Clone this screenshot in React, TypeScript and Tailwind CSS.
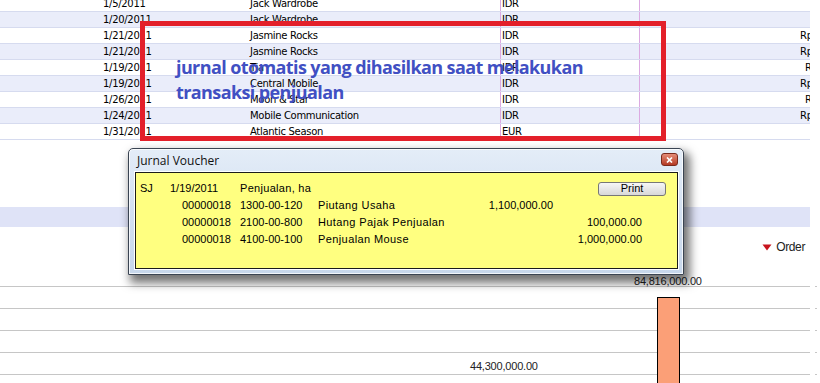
import React from "react";

type Row = {
  date: string;
  name: string;
  cur: string;
  amount?: string;
  shift?: boolean;
};

const rows: Row[] = [
  { date: "1/5/2011", name: "Jack Wardrobe", cur: "IDR" },
  { date: "1/20/2011", name: "Jack Wardrobe", cur: "IDR" },
  { date: "1/21/2011", name: "Jasmine Rocks", cur: "IDR", amount: "Rp 12,500,000.00" },
  { date: "1/21/2011", name: "Jasmine Rocks", cur: "IDR", amount: "Rp 9,800,000.00" },
  { date: "1/19/2011", name: "Tia", cur: "IDR", amount: "Rp 1,100,000.00", shift: true },
  { date: "1/19/2011", name: "Central Mobile", cur: "IDR", amount: "Rp 22,000,000.00" },
  { date: "1/26/2011", name: "Moon & Star", cur: "IDR", amount: "Rp 3,400,000.00", shift: true },
  { date: "1/24/2011", name: "Mobile Communication", cur: "IDR", amount: "Rp 15,600,000.00" },
  { date: "1/31/2011", name: "Atlantic Season", cur: "EUR" },
];

const lines = [
  { no: "00000018", acc: "1300-00-120", name: "Piutang Usaha", debit: "1,100,000.00", credit: "" },
  { no: "00000018", acc: "2100-00-800", name: "Hutang Pajak Penjualan", debit: "", credit: "100,000.00" },
  { no: "00000018", acc: "4100-00-100", name: "Penjualan Mouse", debit: "", credit: "1,000,000.00" },
];

const TableRow = ({ row, odd }: { row: Row; odd: boolean }) => (
  <div
    className={`flex h-4 items-center border-b border-[#d6dbef] text-black ${
      odd ? "bg-[#eaedfa]" : "bg-white"
    }`}
  >
    <div className="w-[103px] shrink-0"></div>
    <div className="w-[147px] shrink-0">{row.date}</div>
    <div className="w-[250px] shrink-0">{row.name}</div>
    <div className="h-full w-[139px] shrink-0 border-l border-[#dcaae2] pl-px flex items-center">
      {row.cur}
    </div>
    <div className="h-full w-[161px] shrink-0 border-l border-[#dcaae2]"></div>
    <div className="w-[10px] shrink-0 overflow-hidden whitespace-nowrap">
      {row.amount && <span className={row.shift ? "pl-[5px]" : ""}>{row.amount}</span>}
    </div>
  </div>
);

const Dialog = () => (
  <div className="absolute left-[128px] top-[148px] flex h-[127px] w-[556px] flex-col rounded-t-[5px] border border-[#3a4452] bg-gradient-to-b from-[#e4edf8] via-[#d3e0f1] to-[#c7d7eb] shadow-[4px_6px_10px_2px_rgba(0,0,0,0.55),inset_0_0_0_1px_rgba(255,255,255,0.75)]">
    <div className="flex h-[23px] shrink-0 items-start justify-between pl-2 pr-[5px]">
      <span className="mt-[4px] font-['Open_Sans'] text-[12px] leading-[15px] text-[#111]">
        Jurnal Voucher
      </span>
      <div className="mt-[4px] flex h-[13px] w-[17px] items-center justify-center rounded-[3px] border border-[#7a2a1e] bg-gradient-to-b from-[#e48c78] to-[#b43823]">
        <svg width="7" height="6" viewBox="0 0 7 6">
          <path d="M1 0.5 L6 5.5 M6 0.5 L1 5.5" stroke="white" strokeWidth="1.7" />
        </svg>
      </div>
    </div>
    <div className="mb-[5px] ml-[6px] mr-[5px] h-[97px] border border-[#1c1c1c] bg-[#ffff80] pt-[7px] font-['Liberation_Sans'] text-[11px] text-black shadow-[0_0_0_1px_#ffffff]">
      <div className="flex h-[17px] items-center pl-[4px]">
        <div className="w-[30px] shrink-0">SJ</div>
        <div className="w-[70px] shrink-0">1/19/2011</div>
        <div className="flex-1 tracking-[0.3px]">Penjualan, ha</div>
        <button className="mr-[11px] flex h-[14px] w-[68px] items-center justify-center rounded-[3px] border border-[#777] bg-gradient-to-b from-[#f6f6f6] to-[#d8d8d8] text-[11px] leading-none text-black">
          Print
        </button>
      </div>
      {lines.map((l) => (
        <div key={l.acc} className="flex h-[17px] items-center pl-[46px]">
          <div className="w-[58px] shrink-0">{l.no}</div>
          <div className="w-[78px] shrink-0">{l.acc}</div>
          <div className="w-[145px] shrink-0 tracking-[0.4px]">{l.name}</div>
          <div className="w-[90px] shrink-0 text-right">{l.debit}</div>
          <div className="w-[89px] shrink-0 text-right">{l.credit}</div>
        </div>
      ))}
    </div>
  </div>
);

export default function App() {
  return (
    <div className="relative h-[383px] w-[820px] overflow-hidden bg-white">
      <div className="-mt-[4px] w-[810px] font-['DejaVu_Sans'] text-[10px] leading-none tracking-[-0.3px]">
        {rows.map((r, i) => (
          <TableRow key={i} row={r} odd={i % 2 === 1} />
        ))}
      </div>

      <div className="mt-[67px] h-[20px] w-[810px] bg-[#dfe3f7]"></div>

      <div className="mt-[12px] flex h-[16px] items-center justify-end pr-[15px] font-['Liberation_Sans'] text-[12px] tracking-[-0.4px] text-[#222]">
        <svg width="10" height="7" viewBox="0 0 10 7" className="mr-[4px]">
          <path d="M0.5 0.5 L9.5 0.5 L5 6.5 Z" fill="#c8141e" />
        </svg>
        Order
      </div>

      <div className="relative mt-[20px] h-[200px]">
        <div className="flex flex-col pt-[11px]">
          {[0, 1, 2, 3, 4].map((n) => (
            <div key={n} className="mb-[21px] flex h-px items-center">
              <div className="h-px w-[810px] bg-[#c6c6c6]"></div>
              <div className="ml-[5px] h-px w-[2px] bg-[#c6c6c6]"></div>
            </div>
          ))}
        </div>
        <span className="absolute left-[634px] top-[0px] font-['Liberation_Sans'] text-[11px] leading-[12px] tracking-[-0.2px] text-[#222]">
          84,816,000.00
        </span>
        <div className="absolute left-[657px] top-[22px] h-[120px] w-[23px] border border-black bg-[#fb9f77]"></div>
        <span className="absolute left-[470px] top-[85px] font-['Liberation_Sans'] text-[11px] leading-[12px] tracking-[-0.2px] text-[#222]">
          44,300,000.00
        </span>
      </div>

      <div className="absolute left-[140px] top-[21px] h-[120px] w-[526px] border-[5px] border-[#e3202a]"></div>
      <div className="absolute left-[176px] top-[55px] font-['Open_Sans'] text-[18px] font-bold leading-[25px] tracking-[-0.6px] text-[#4150c3]">
        <div>jurnal otomatis yang dihasilkan saat melakukan</div>
        <div>transaksi penjualan</div>
      </div>

      <Dialog />
    </div>
  );
}
